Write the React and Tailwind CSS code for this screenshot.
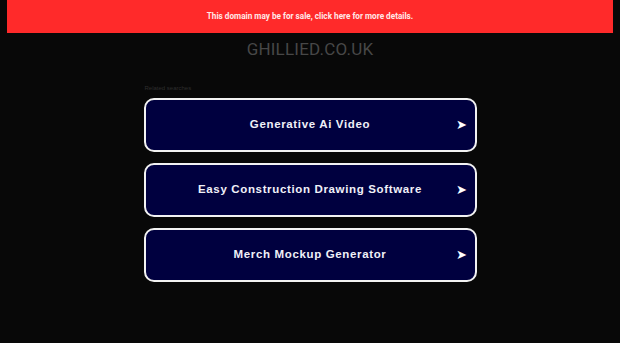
import React from 'react';

const searches = ['Generative Ai Video', 'Easy Construction Drawing Software', 'Merch Mockup Generator'];

const App = () => {
  return (
    <div className="min-h-[343px] w-full bg-[#080808] font-['Liberation_Sans',Arial,sans-serif]">
      {/* Sale banner */}
      <div className="mx-[7px] h-[33px] bg-[#ff2a2a] flex items-center justify-center">
        <span className="text-[8.2px] font-bold text-[#ffe8e8] font-['Roboto',sans-serif]">
          This domain may be for sale, click here for more details.
        </span>
      </div>

      <div className="flex justify-center pt-[6px]">
        <h1 className="text-[17px] leading-[20px] text-[#474747] font-['Roboto',sans-serif] tracking-[0.2px]">
          GHILLIED.CO.UK
        </h1>
      </div>

      <div className="w-[333px] mx-auto mt-[25px]">
        <p className="text-[6px] leading-[8px] text-[#2e2e2e] pl-[1px]">Related searches</p>
        <div className="mt-[6px] flex flex-col gap-[11px]">
          {searches.map((s) => (
            <div
              key={s}
              className="relative h-[54px] rounded-[10px] border-2 border-[#f2f2f2] bg-[#00003f] flex items-center justify-center"
            >
              <span className="text-[11.5px] font-bold text-[#f0f0f8] tracking-[0.65px]">{s}</span>
              <span className="absolute right-[8px] top-1/2 -translate-y-1/2 text-[13px] text-white">➤</span>
            </div>
          ))}
        </div>
      </div>
    </div>
  );
};

export default App;
